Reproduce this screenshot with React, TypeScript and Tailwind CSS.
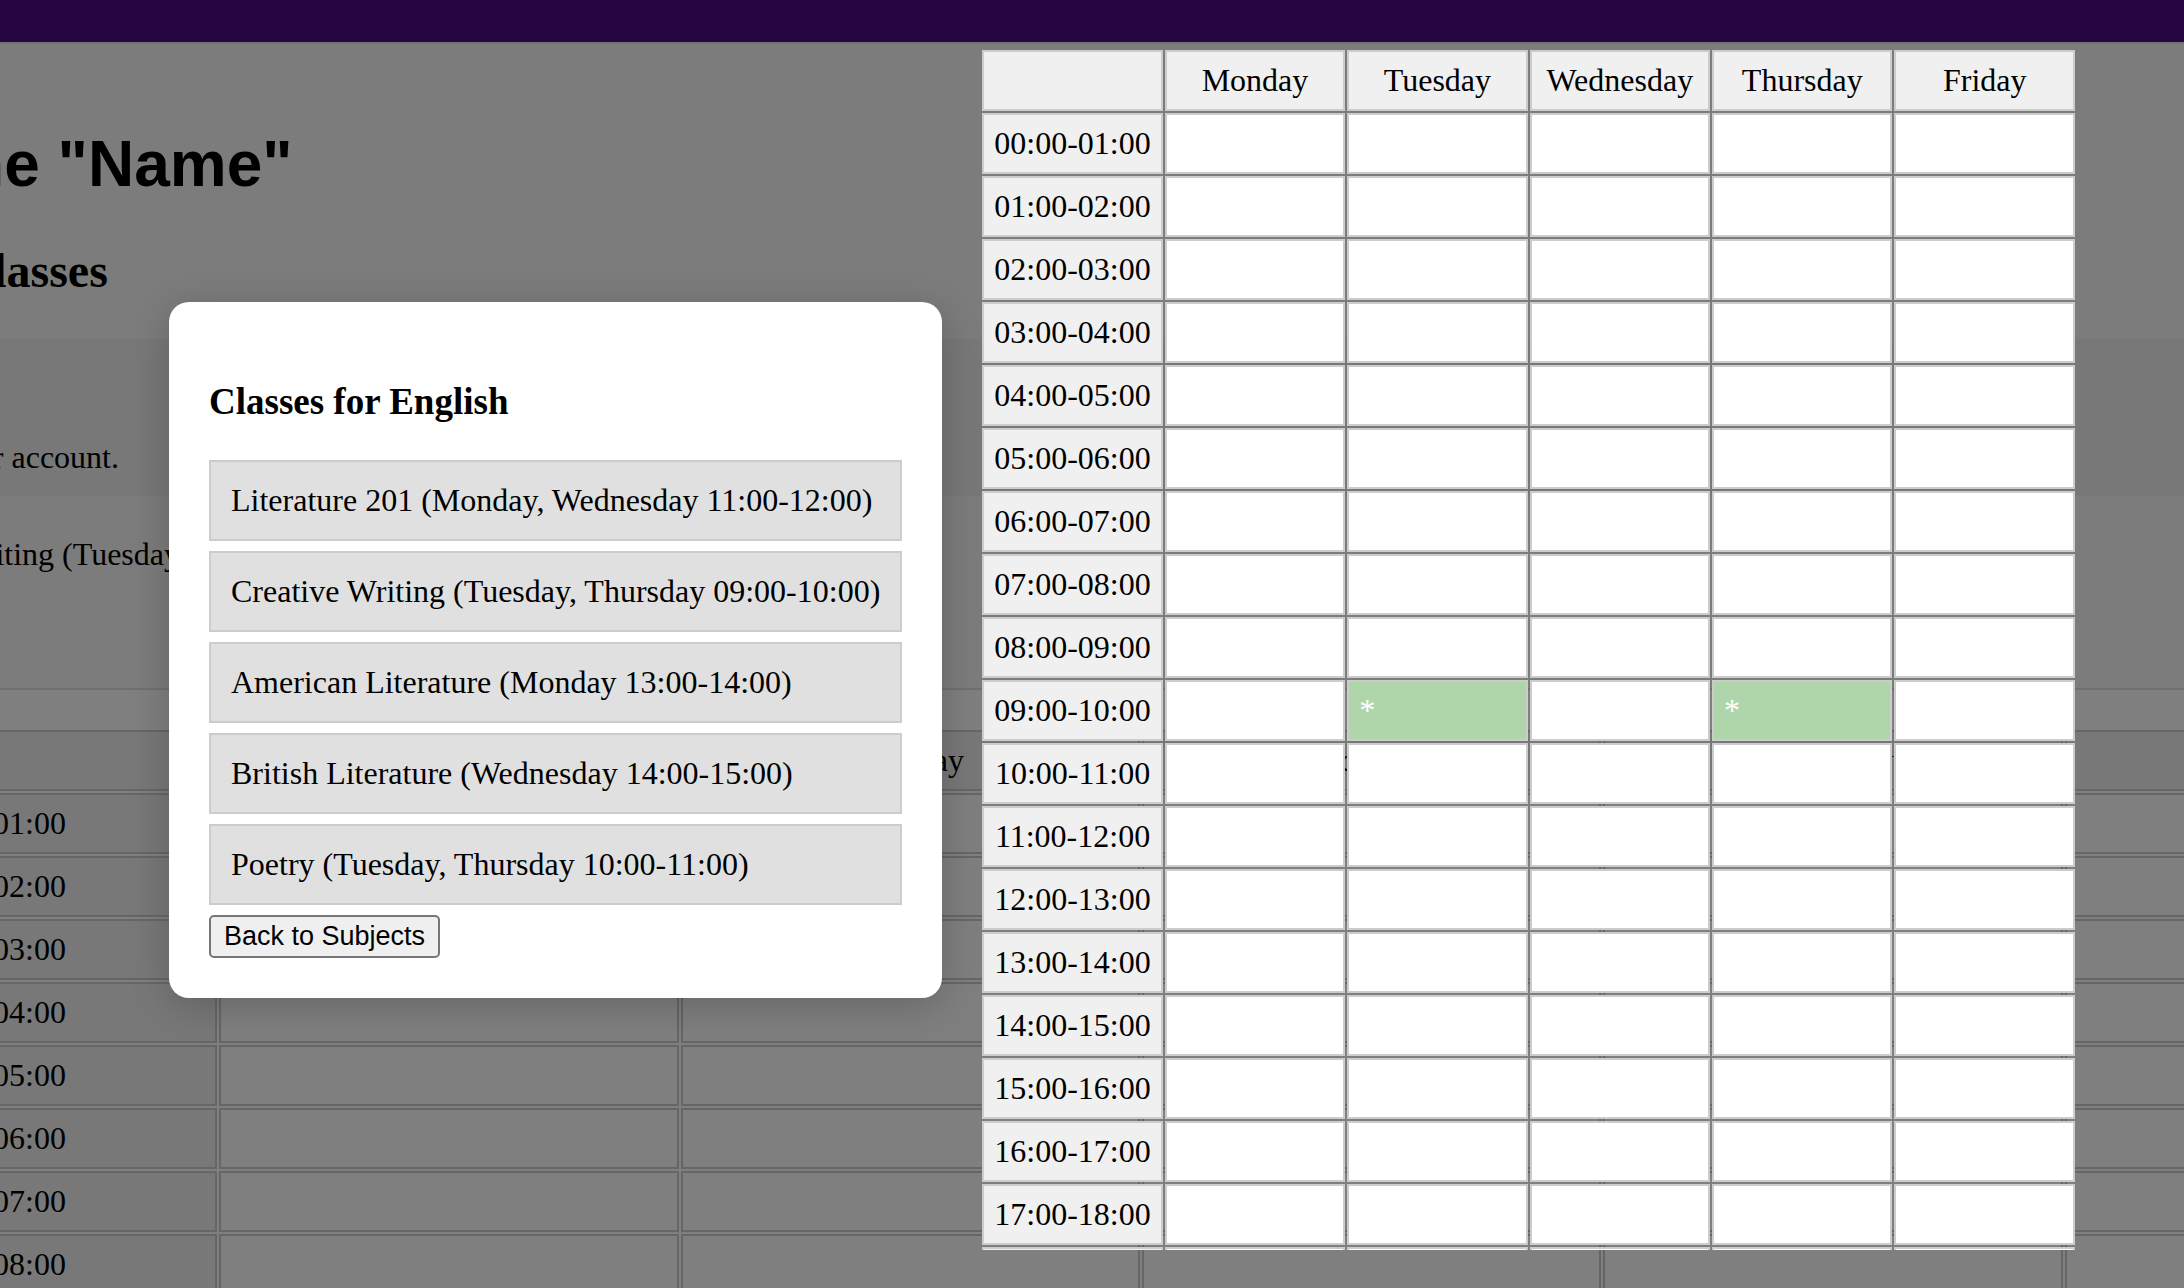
const days = ['Monday', 'Tuesday', 'Wednesday', 'Thursday', 'Friday'];

const pad = (n: number) => String(n).padStart(2, '0');
const slots = Array.from({ length: 24 }, (_, h) => `${pad(h)}:00-${pad((h + 1) % 24)}:00`);

const classes = [
  'Literature 201 (Monday, Wednesday 11:00-12:00)',
  'Creative Writing (Tuesday, Thursday 09:00-10:00)',
  'American Literature (Monday 13:00-14:00)',
  'British Literature (Wednesday 14:00-15:00)',
  'Poetry (Tuesday, Thursday 10:00-11:00)',
];

const previewed = new Set(['Tuesday 09:00-10:00', 'Thursday 09:00-10:00']);

function Timetable({ highlighted }: { highlighted?: Set<string> }) {
  const head = 'border-2 border-[#ccc] bg-[#f0f0f0] p-[10px] text-center font-normal whitespace-nowrap';
  return (
    <table className="w-full table-fixed border-separate border-spacing-[2px]">
      <thead>
        <tr>
          <td className="h-[61px] border-2 border-[#ccc] bg-[#f0f0f0]" />
          {days.map((day) => (
            <th key={day} scope="col" className={head}>
              {day}
            </th>
          ))}
        </tr>
      </thead>
      <tbody>
        {slots.map((slot) => (
          <tr key={slot}>
            <th scope="row" className={head}>
              {slot}
            </th>
            {days.map((day) =>
              highlighted?.has(`${day} ${slot}`) ? (
                <td key={day} className="border-2 border-[#ccc] bg-[#aed6aa] p-[10px] text-white">
                  *
                </td>
              ) : (
                <td key={day} className="border-2 border-[#ccc] bg-white p-[10px]" />
              ),
            )}
          </tr>
        ))}
      </tbody>
    </table>
  );
}

export default function App() {
  return (
    <div className="relative h-screen overflow-hidden bg-[#f9f9f9] font-['Liberation_Serif',serif] text-[32px] leading-[37px] text-black">
      <header className="h-11 border-b-2 border-[#e6e6e6] bg-[#4c0a84]" />

      <main className="-ml-[284px] w-[calc(100%+666px)] whitespace-nowrap">
        <h1 className="mt-[83px] ml-[44px] font-['Liberation_Sans',sans-serif] text-[64px] leading-[74px] font-bold">
          Welcome "Name"
        </h1>
        <h2 className="mt-[42px] ml-[130px] text-[48px] leading-[55px] font-bold">Your Classes</h2>
        <section className="mt-[41px] bg-[#f0f0f0] pt-[100px] pb-5">
          <p className="w-[403px] text-right">Manage your account.</p>
        </section>
        <p className="mt-10 ml-[124px]">{classes[1]}</p>
        <div className="mt-[115px] border-2 border-[#e0e0e0] bg-white p-[38px]">
          <Timetable />
        </div>
      </main>

      <div className="absolute inset-0 flex items-stretch gap-[38px] bg-black/50 pt-12 pr-[107px] pb-[38px] pl-[169px]">
        <div
          role="dialog"
          aria-labelledby="dialog-title"
          className="mt-0.5 shrink-0 self-center rounded-[20px] bg-white p-10 shadow-[0_8px_40px_rgba(0,0,0,0.2)]"
        >
          <h3 id="dialog-title" className="mt-[38px] mb-[37px] text-[37px] leading-[43px] font-bold">
            Classes for English
          </h3>
          <ul>
            {classes.map((name) => (
              <li key={name} className="mb-[10px]">
                <button
                  type="button"
                  className="block w-full border-2 border-[#ccc] bg-[#e0e0e0] p-5 text-left whitespace-nowrap"
                >
                  {name}
                </button>
              </li>
            ))}
          </ul>
          <button
            type="button"
            className="block rounded-[5px] border-2 border-[#767676] bg-[#efefef] px-[13px] py-1 font-['Liberation_Sans',sans-serif] text-[27px] leading-[31px]"
          >
            Back to Subjects
          </button>
        </div>
        <div className="min-w-0 flex-1 overflow-hidden">
          <Timetable highlighted={previewed} />
        </div>
      </div>
    </div>
  );
}
